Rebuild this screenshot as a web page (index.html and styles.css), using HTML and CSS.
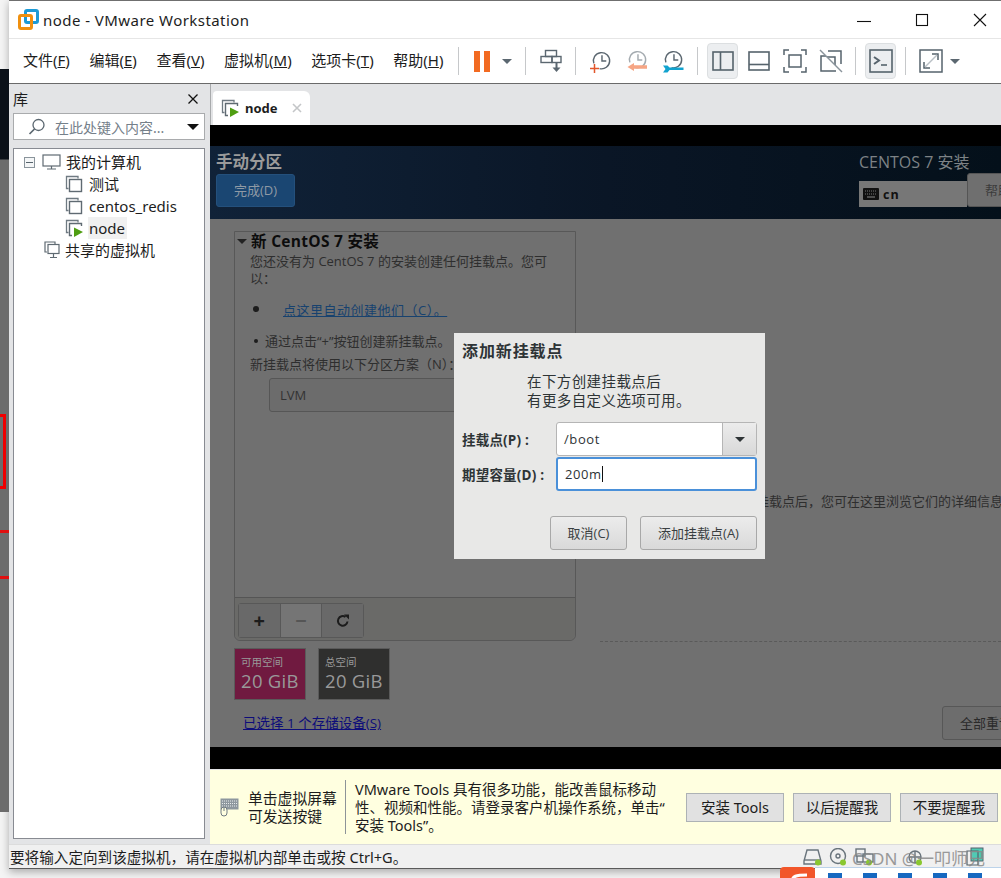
FILE: index.html
```html
<!DOCTYPE html>
<html lang="zh-CN">
<head>
    <meta charset="UTF-8">
    <meta name="viewport" content="width=device-width, initial-scale=1.0">
    <title>node - VMware Workstation</title>
    <link rel="stylesheet" href="styles.css">
</head>
<body>
    <svg class="defs" width="0" height="0">
        <symbol id="vm" viewBox="0 0 18 18">
            <path d="M3.5 13.5H1.5V1.5H13V3.5" fill="none" stroke="#6f7a82" stroke-width="1.3"/>
            <rect x="4.5" y="4.5" width="12" height="12" fill="#fff" stroke="#5f6a72" stroke-width="1.4"/>
        </symbol>
        <symbol id="vmrun" viewBox="0 0 18 18">
            <path d="M3.5 13.5H1.5V1.5H13V3.5" fill="none" stroke="#6f7a82" stroke-width="1.3"/>
            <path d="M7 16.5H4.5V4.5H16.5V7" fill="none" stroke="#5f6a72" stroke-width="1.4"/>
            <path d="M9 8.5L18 13L9 18Z" fill="#4f9e12"/>
        </symbol>
        <symbol id="clock" viewBox="0 0 22 22">
            <path d="M3 14A8.5 8.5 0 1 1 9 19.5" fill="none" stroke="#5b6770" stroke-width="1.5"/>
            <path d="M11.500 5.500V11.500H16" fill="none" stroke="#5b6770" stroke-width="1.5"/>
        </symbol>
    </svg>

    <div class="backdrop">
        <div class="red-box"></div>
        <div class="red-line red-line-a"></div>
        <div class="red-line red-line-b"></div>
    </div>

    <div class="window">
        <header class="titlebar">
            <svg class="logo" width="21" height="21" viewBox="0 0 21 21">
                <rect x="7.500" y="1.500" width="12" height="12" rx="1.500" fill="none" stroke="#1c9ad6" stroke-width="3"/>
                <rect x="1.500" y="6.500" width="12" height="13" rx="1.500" fill="none" stroke="#f0900f" stroke-width="3"/>
            </svg>
            <span class="title-text">node - VMware Workstation</span>
            <div class="win-controls">
                <svg width="16" height="16" viewBox="0 0 16 16"><path d="M1 9.500H15" stroke="#111" stroke-width="1.100"/></svg>
                <svg width="16" height="16" viewBox="0 0 16 16"><rect x="2.500" y="2.500" width="11" height="11" fill="none" stroke="#111" stroke-width="1.100"/></svg>
                <svg width="16" height="16" viewBox="0 0 16 16"><path d="M2 2L14 14M14 2L2 14" stroke="#111" stroke-width="1.100"/></svg>
            </div>
        </header>

        <div class="toolbar">
            <nav class="menu">
                <span>文件(<u>F</u>)</span>
                <span>编辑(<u>E</u>)</span>
                <span>查看(<u>V</u>)</span>
                <span>虚拟机(<u>M</u>)</span>
                <span>选项卡(<u>T</u>)</span>
                <span>帮助(<u>H</u>)</span>
            </nav>
            <i class="sep sep-first"></i>
            <div class="tool pause"><b></b><b></b></div>
            <i class="caret"></i>
            <i class="sep"></i>
            <div class="tool">
                <svg width="22" height="24" viewBox="0 0 22 24" fill="none" stroke="#5b6770" stroke-width="1.400">
                    <rect x="5.500" y="1.500" width="11" height="6"/>
                    <rect x="1" y="7.500" width="11" height="6"/>
                    <rect x="12" y="7.500" width="9" height="6"/>
                    <path d="M16.500 13.500V20" stroke-width="2"/>
                    <path d="M12.500 18.500H20.500L16.500 23Z" fill="#5b6770" stroke="none"/>
                </svg>
            </div>
            <i class="sep"></i>
            <div class="tool">
                <svg width="22" height="24" viewBox="0 0 22 24"><use href="#clock" width="21" height="21" x="1" y="1"/><path d="M0 19.500H9M4.500 15V24" stroke="#e2552a" stroke-width="1.500"/></svg>
            </div>
            <div class="tool">
                <svg width="22" height="24" viewBox="0 0 22 24"><use href="#clock" width="21" height="21" x="1" y="0" opacity=".55"/><path d="M8 14L1.500 18L8 22V19.800H21V16.300H8Z" fill="#f6a584"/></svg>
            </div>
            <div class="tool">
                <svg width="22" height="24" viewBox="0 0 22 24"><use href="#clock" width="21" height="21" x="1" y="0"/><path d="M1 16.500H5.500L7.500 18.500H21.500V21H7.500L5.500 23.500H1L3.500 20Z" fill="#12a3cf"/></svg>
            </div>
            <i class="sep"></i>
            <div class="tool active">
                <svg width="22" height="22" viewBox="0 0 22 22" fill="none" stroke="#56636c" stroke-width="1.600"><rect x="1" y="2" width="20" height="18"/><path d="M8.500 2V20"/></svg>
            </div>
            <div class="tool">
                <svg width="22" height="22" viewBox="0 0 22 22" fill="none" stroke="#56636c" stroke-width="1.600"><rect x="1" y="2" width="20" height="18"/><path d="M1 14.500H21"/></svg>
            </div>
            <div class="tool">
                <svg width="24" height="24" viewBox="0 0 24 24" fill="none" stroke="#56636c" stroke-width="1.500"><path d="M1 6V1H6M18 1H23V6M23 18V23H18M6 23H1V18"/><rect x="6" y="6" width="12" height="12"/></svg>
            </div>
            <div class="tool">
                <svg width="24" height="24" viewBox="0 0 24 24" fill="none" stroke="#56636c" stroke-width="1.500"><path d="M9 2H22V15M17 22H2V7H7"/><path d="M8 8H16V16" /><path d="M1 1L23 23" stroke="#8a949b"/></svg>
            </div>
            <i class="sep"></i>
            <div class="tool active">
                <svg width="24" height="24" viewBox="0 0 24 24" fill="none" stroke="#56636c" stroke-width="1.600"><rect x="1" y="1" width="22" height="22"/><path d="M5 8L10 11.500L5 15" stroke-width="2"/><path d="M12 16H18"/></svg>
            </div>
            <i class="sep"></i>
            <div class="tool">
                <svg width="24" height="24" viewBox="0 0 24 24" fill="none" stroke="#56636c" stroke-width="1.500"><rect x="1" y="1" width="22" height="22"/><path d="M13 5H19V11M11 19H5V13" /><path d="M18 6L6 18" stroke="#b9c0c5"/></svg>
            </div>
            <i class="caret caret-last"></i>
        </div>

        <div class="main">
            <aside class="library">
                <div class="lib-head">
                    <span>库</span>
                    <svg width="12" height="12" viewBox="0 0 12 12"><path d="M1.500 1.500L10.500 10.500M10.500 1.500L1.500 10.500" stroke="#111" stroke-width="1.300"/></svg>
                </div>
                <div class="lib-search">
                    <svg width="18" height="18" viewBox="0 0 18 18" fill="none" stroke="#5b6770" stroke-width="1.300"><circle cx="10.500" cy="7" r="5.500"/><path d="M6.500 11L1.500 16" stroke-width="1.700"/></svg>
                    <span>在此处键入内容...</span>
                    <i class="lib-arrow"></i>
                </div>
                <div class="tree">
                    <div class="tree-row">
                        <i class="expander"></i>
                        <svg class="tree-icon" width="19" height="16" viewBox="0 0 19 16" fill="none" stroke="#5f6a72" stroke-width="1.200"><rect x="1" y="1" width="17" height="11"/><path d="M9.500 12V15M5 15H14"/></svg>
                        <span>我的计算机</span>
                    </div>
                    <div class="tree-row tree-child"><svg class="tree-icon" width="18" height="18"><use href="#vm"/></svg><span>测试</span></div>
                    <div class="tree-row tree-child"><svg class="tree-icon" width="18" height="18"><use href="#vm"/></svg><span>centos_redis</span></div>
                    <div class="tree-row tree-child"><svg class="tree-icon" width="18" height="18"><use href="#vmrun"/></svg><span class="selected">node</span></div>
                    <div class="tree-row tree-shared">
                        <svg class="tree-icon" width="16" height="18" viewBox="0 0 16 18" fill="none" stroke="#5f6a72" stroke-width="1.200"><path d="M3 11H1V1H11V3"/><rect x="4" y="3.500" width="11" height="9" fill="#fff"/><path d="M9.500 12.500V16.500M6 16.500H13"/></svg>
                        <span>共享的虚拟机</span>
                    </div>
                </div>
            </aside>

            <section class="workspace">
                <div class="tabs">
                    <div class="tab">
                        <svg width="18" height="18"><use href="#vmrun"/></svg>
                        <span class="tab-name">node</span>
                        <svg class="tab-close" width="10" height="10" viewBox="0 0 10 10"><path d="M1 1L9 9M9 1L1 9" stroke="#c4c6c8" stroke-width="1.600"/></svg>
                    </div>
                </div>

                <div class="guest">
                    <div class="guest-head">
                        <div class="guest-head-left">
                            <div class="spoke-title">手动分区</div>
                            <div class="done-btn">完成(D)</div>
                        </div>
                        <div class="guest-head-right">
                            <div class="product">CENTOS 7 安装</div>
                            <div class="lang-row">
                                <div class="lang-box">
                                    <svg width="16" height="12" viewBox="0 0 16 12"><rect width="16" height="12" rx="1" fill="#111"/><path d="M2 3H14M2 6H14" stroke="#777" stroke-width="1" stroke-dasharray="1 1"/><path d="M4 9H12" stroke="#777" stroke-width="1.200"/></svg>
                                    <span>cn</span>
                                </div>
                                <div class="help-btn">帮助！</div>
                            </div>
                        </div>
                    </div>

                    <div class="guest-body">
                        <div class="guest-left">
                            <div class="mount-panel">
                                <div class="mount-info">
                                    <h3><i class="tri"></i>新 CentOS 7 安装</h3>
                                    <p>您还没有为 CentOS 7 的安装创建任何挂载点。您可以：</p>
                                    <div class="bullet-row"><i class="bullet"></i><a class="auto-link">点这里自动创建他们（C）。</a></div>
                                    <div class="plain-row"><i class="bullet small"></i><span>通过点击“+”按钮创建新挂载点。</span></div>
                                    <p class="scheme">新挂载点将使用以下分区方案（N）：</p>
                                    <div class="scheme-select">LVM</div>
                                </div>
                                <div class="mount-tools">
                                    <div class="tool-group">
                                        <span class="on">+</span>
                                        <span class="off">−</span>
                                        <span class="on">
                                            <svg width="14" height="14" viewBox="0 0 14 14" fill="none" stroke="#1c1c1c" stroke-width="2"><path d="M11.500 7.500A4.800 4.800 0 1 1 9.500 3"/><path d="M8 0.500H13V5.500Z" fill="#1c1c1c" stroke="none"/></svg>
                                        </span>
                                    </div>
                                </div>
                            </div>
                            <div class="space-cards">
                                <div class="space-card free"><small>可用空间</small><b>20 GiB</b></div>
                                <div class="space-card total"><small>总空间</small><b>20 GiB</b></div>
                            </div>
                            <a class="device-link">已选择 1 个存储设备(S)</a>
                        </div>
                        <div class="guest-right">
                            <p class="hint">在您为 CentOS 7 安装创建挂载点后，您可在这里浏览它们的详细信息。</p>
                            <div class="dash"></div>
                            <div class="reset-btn">全部重设(R)</div>
                        </div>
                    </div>

                    <div class="dialog">
                        <h2>添加新挂载点</h2>
                        <p class="dialog-text">在下方创建挂载点后<br>有更多自定义选项可用。</p>
                        <div class="field">
                            <label>挂载点(P) :</label>
                            <div class="combo"><span>/boot</span><div class="combo-btn"><i></i></div></div>
                        </div>
                        <div class="field">
                            <label>期望容量(D) :</label>
                            <div class="entry"><span>200m</span><i class="cursor"></i></div>
                        </div>
                        <div class="dialog-actions">
                            <div class="dlg-btn cancel">取消(C)</div>
                            <div class="dlg-btn add">添加挂载点(A)</div>
                        </div>
                    </div>
                </div>

                <div class="infobar">
                    <svg class="kbd" width="19" height="19" viewBox="0 0 19 19">
                        <rect x="0.500" y="0.500" width="18" height="11" fill="#8d979e"/>
                        <path d="M2 3H17M2 5.500H17M2 8H17" stroke="#e8ecec" stroke-width="1" stroke-dasharray="1 1"/>
                        <rect x="1" y="9" width="6" height="9" rx="3" fill="#ffffe0" stroke="#6f7a82"/>
                        <path d="M4 9V13" stroke="#6f7a82"/>
                    </svg>
                    <div class="info-left">单击虚拟屏幕<br>可发送按键</div>
                    <div class="info-text">VMware Tools 具有很多功能，能改善鼠标移动<br>性、视频和性能。请登录客户机操作系统，单击“<br>安装 Tools”。</div>
                    <div class="info-btns">
                        <div class="info-btn">安装 Tools</div>
                        <div class="info-btn">以后提醒我</div>
                        <div class="info-btn">不要提醒我</div>
                    </div>
                </div>
            </section>
        </div>

        <footer class="statusbar">
            <span>要将输入定向到该虚拟机，请在虚拟机内部单击或按 Ctrl+G。</span>
            <div class="tray">
                <svg width="20" height="18" viewBox="0 0 20 18" fill="none" stroke="#5b6770" stroke-width="1.400"><path d="M1 13L4 2H15L18 13V16H1Z"/><path d="M1 12H18"/><circle cx="15" cy="14.500" r="3" fill="#7fc31c" stroke="none"/></svg>
                <svg width="20" height="18" viewBox="0 0 20 18" fill="none" stroke="#5b6770" stroke-width="1.400"><circle cx="9" cy="8" r="7.500"/><circle cx="9" cy="8" r="2"/><circle cx="14" cy="14.500" r="3" fill="#7fc31c" stroke="none"/></svg>
                <svg width="20" height="18" viewBox="0 0 20 18" fill="none" stroke="#5b6770" stroke-width="1.400"><rect x="1" y="1" width="9" height="7"/><rect x="8" y="6" width="10" height="8"/><path d="M2 8V14H8"/><circle cx="14" cy="14.500" r="3" fill="#7fc31c" stroke="none"/></svg>
                <svg class="tray-gap" width="20" height="18" viewBox="0 0 20 18" fill="none" stroke="#5b6770" stroke-width="1.400"><circle cx="9" cy="9" r="6"/><path d="M9 3V15M3 9H15"/><circle cx="13" cy="14.500" r="3" fill="#7fc31c" stroke="none"/></svg>
                <svg class="tray-last" width="18" height="20" viewBox="0 0 18 20"><rect x="5" y="1" width="12" height="13" fill="#3ec7ae" stroke="#44545c"/><path d="M1 4H12V18H1Z" fill="none" stroke="#44545c" stroke-width="1.200"/></svg>
            </div>
            <span class="watermark">CSDN @一叩师兄</span>
        </footer>
    </div>

    <div class="ime">
        <div class="ime-logo">
            <svg width="35" height="11" viewBox="0 0 35 11"><path d="M12 10C12 4 16 3 27 3" fill="none" stroke="#fff" stroke-width="3"/></svg>
        </div>
        <div class="ime-bar">
            <i></i><i></i><i></i><i></i><i></i><i></i>
        </div>
    </div>
</body>
</html>
```

FILE: styles.css
```css
* {
    box-sizing: border-box;
}

html, body {
    margin: 0;
    padding: 0;
    height: 878px;
    overflow: hidden;
}

body {
    display: flex;
    position: relative;
    background-color: #f4f4f4;
    color: #1d1d1d;
    font-family: "Noto Sans", "Noto Sans CJK SC", sans-serif;
    font-size: 15px;
}

.defs {
    position: absolute;
}

p, h2, h3 {
    margin: 0;
}

/* what shows of the desktop left of the window */
.backdrop {
    position: relative;
    width: 9px;
    height: 743px;
    margin-top: 69px;
    flex: none;
    background: linear-gradient(#0b1119 0, #0b1119 90px, #6c6c6c 91px);
}

.red-box {
    position: absolute;
    left: -3px;
    top: 345px;
    width: 9px;
    height: 75px;
    border: 3px solid #f00000;
}

.red-line {
    position: absolute;
    left: 0;
    width: 9px;
    height: 3px;
    background-color: #e01010;
}

.red-line-a {
    top: 461px;
}

.red-line-b {
    top: 507px;
}

.window {
    width: 992px;
    height: 869px;
    flex: none;
    display: flex;
    flex-direction: column;
    background-color: #fff;
    border-top: 1px solid #6f6f6f;
    border-bottom: 1px solid #5a5a5a;
    box-shadow: 0 3px 8px rgba(0, 0, 0, 0.3);
}

.titlebar {
    height: 38px;
    flex: none;
    display: flex;
    align-items: center;
    padding-left: 9px;
    border-bottom: 1px solid #e6e6e6;
}

.logo {
    margin-right: 4px;
}

.title-text {
    font-size: 15px;
    letter-spacing: 0.45px;
}

.win-controls {
    margin-left: auto;
    display: flex;
    gap: 42px;
    padding-right: 13px;
}

.toolbar {
    height: 45px;
    flex: none;
    display: flex;
    align-items: center;
    padding-left: 14px;
    border-bottom: 1px solid #6a6a6a;
}

.menu {
    display: flex;
    gap: 19.600px;
    margin-bottom: 3px;
    font-size: 15px;
}

.sep {
    width: 1px;
    height: 28px;
    margin: 0 6.500px;
    background-color: #c6c8ca;
    flex: none;
}

.sep-first {
    margin-left: 15px;
}

.toolbar .tool {
    width: 36px;
    height: 36px;
    display: flex;
    align-items: center;
    justify-content: center;
    flex: none;
}

.toolbar .tool.active {
    width: 31px;
    margin: 0 2.500px;
    background-color: #eceef0;
    border: 1px solid #dcdfe1;
    border-radius: 4px;
}

.toolbar .pause {
    width: 33px;
    gap: 4px;
}

.pause b {
    width: 6px;
    height: 21px;
    background-color: #f26a21;
}

.caret {
    width: 0;
    height: 0;
    margin: 0 6.500px 0 3.500px;
    border-left: 5px solid transparent;
    border-right: 5px solid transparent;
    border-top: 5px solid #5b6770;
    flex: none;
}

.caret-last {
    margin-left: 1.500px;
}

.main {
    flex: 1;
    min-height: 0;
    display: flex;
}

.library {
    width: 201px;
    flex: none;
    display: flex;
    flex-direction: column;
    padding: 0 5px 5px 3px;
    background-color: #e3e4e6;
    border-left: 1px solid #e3e4e6;
}

.lib-head {
    height: 29px;
    display: flex;
    align-items: center;
    justify-content: space-between;
    padding: 0 6px 0 0;
    font-size: 15px;
}

.lib-search {
    height: 27px;
    display: flex;
    align-items: center;
    padding-left: 14px;
    background-color: #fff;
    border: 1px solid #a9abad;
    color: #75808a;
    font-size: 14px;
}

.lib-search span {
    margin-left: 9px;
    white-space: nowrap;
}

.lib-arrow {
    width: 0;
    height: 0;
    margin-left: auto;
    margin-right: 5px;
    border-left: 6px solid transparent;
    border-right: 6px solid transparent;
    border-top: 6px solid #111;
}

.tree {
    flex: 1;
    margin-top: 8px;
    padding-top: 2px;
    background-color: #fff;
    border: 1px solid #888b92;
}

.tree-row {
    height: 22px;
    display: flex;
    align-items: center;
    padding-left: 10px;
    font-size: 15px;
    white-space: nowrap;
}

.expander {
    position: relative;
    width: 11px;
    height: 11px;
    margin-right: 7px;
    border: 1px solid #8a949b;
    background-color: #f4f6f7;
    flex: none;
}

.expander::after {
    content: "";
    position: absolute;
    left: 1px;
    right: 1px;
    top: 4px;
    height: 1px;
    background-color: #56636c;
}

.tree-icon {
    flex: none;
}

.tree-row > span {
    margin-left: 4px;
    padding: 0 2px 0 1px;
    line-height: 22px;
}

.tree-child {
    padding-left: 51px;
}

.tree-child > span {
    margin-left: 5px;
}

.selected {
    background-color: #f0f0f0;
}

.tree-shared {
    padding-left: 30px;
}

.workspace {
    flex: 1;
    min-width: 0;
    display: flex;
    flex-direction: column;
}

.tabs {
    height: 41px;
    flex: none;
    padding: 7px 0 0 2px;
    background-color: #e3e4e6;
    border-left: 1px solid #a8aaac;
}

.tab {
    width: 97px;
    height: 34px;
    display: flex;
    align-items: center;
    padding-left: 8px;
    background-color: #fff;
    border-radius: 4px 6px 0 0;
}

.tab-name {
    margin-left: 6px;
    font-size: 13px;
    font-weight: 700;
}

.tab-close {
    margin-left: 14px;
}

/* the guest screen, dimmed behind the dialog */
.guest {
    position: relative;
    height: 644px;
    flex: none;
    display: flex;
    flex-direction: column;
    padding: 21px 0 22px;
    background-color: #000;
    overflow: hidden;
    font-family: "Open Sans", "Noto Sans CJK SC", sans-serif;
}

.guest-head {
    height: 73px;
    flex: none;
    display: flex;
    justify-content: space-between;
    background: linear-gradient(90deg, #102238, #0a1626 50%, #04101a);
}

.guest-head-left {
    padding: 7px 0 0 6px;
}

.spoke-title {
    color: #9a9a9a;
    font-size: 16.500px;
    font-weight: 700;
    line-height: 18px;
}

.done-btn {
    width: 79px;
    height: 33px;
    margin-top: 3px;
    background-color: #1a4672;
    border: 1px solid #24507c;
    border-radius: 3px;
    color: #8f9aa5;
    font-size: 13px;
    line-height: 31px;
    text-align: center;
}

.guest-head-right {
    width: 142px;
    padding-top: 7px;
    overflow: hidden;
}

.product {
    color: #7d8286;
    font-size: 16px;
    line-height: 18px;
    white-space: nowrap;
}

.lang-row {
    display: flex;
    width: 170px;
    margin-top: 2px;
    align-items: flex-end;
}

.lang-box {
    width: 108px;
    height: 26px;
    display: flex;
    align-items: center;
    gap: 4px;
    padding-left: 4px;
    background-color: #777;
    color: #111;
    font-size: 12.500px;
    font-weight: 700;
    letter-spacing: 1px;
}

.help-btn {
    width: 60px;
    height: 34px;
    padding-left: 17px;
    background-color: #6f6f6f;
    border: 1px solid #555;
    border-radius: 3px;
    color: #3c3c3c;
    font-size: 13px;
    line-height: 32px;
    white-space: nowrap;
}

.guest-body {
    flex: 1;
    min-height: 0;
    display: flex;
    background-color: #707070;
    color: #2e2e2e;
}

.guest-left {
    width: 390px;
    flex: none;
    padding: 12px 0 0 24px;
}

.mount-panel {
    width: 342px;
    height: 410px;
    display: flex;
    flex-direction: column;
    border: 1px solid #585858;
    border-radius: 0 0 6px 6px;
}

.mount-info {
    flex: 1;
    padding: 0 4px 0 2px;
    font-size: 13px;
}

.mount-info h3 {
    display: flex;
    align-items: center;
    margin-bottom: 3px;
    color: #0c0c0c;
    font-size: 15.500px;
    font-weight: 700;
    letter-spacing: 0.300px;
    line-height: 18px;
}

.tri {
    width: 0;
    height: 0;
    margin-right: 4px;
    border-left: 5px solid transparent;
    border-right: 5px solid transparent;
    border-top: 5px solid #222;
}

.mount-info p {
    margin-left: 13px;
    line-height: 17px;
}

.bullet-row {
    display: flex;
    align-items: center;
    height: 20px;
    margin: 12px 0 0 16px;
}

.bullet {
    width: 6px;
    height: 6px;
    flex: none;
    background-color: #1c1c1c;
    border-radius: 50%;
}

.bullet.small {
    width: 4px;
    height: 4px;
}

.auto-link {
    margin-left: 24px;
    color: #17426f;
    letter-spacing: 0.500px;
    text-decoration: underline;
}

.plain-row {
    display: flex;
    align-items: center;
    gap: 7px;
    height: 17px;
    margin: 13px 0 0 17px;
    white-space: nowrap;
}

.mount-info .scheme {
    margin-top: 7px;
    white-space: nowrap;
}

.scheme-select {
    width: 200px;
    height: 34px;
    margin: 5px 0 0 32px;
    padding-left: 10px;
    background-color: #6c6c6c;
    border: 1px solid #565656;
    border-radius: 3px;
    line-height: 32px;
    color: #333;
}

.mount-tools {
    height: 43px;
    flex: none;
    padding: 5px 0 0 3px;
    background-color: #6a6a68;
    border-top: 1px solid #555;
    border-radius: 0 0 6px 6px;
}

.tool-group {
    display: flex;
    width: 126px;
    height: 35px;
    border: 1px solid #585858;
    border-radius: 3px;
}

.tool-group span {
    flex: 1;
    display: flex;
    align-items: center;
    justify-content: center;
    font-size: 20px;
    font-weight: 700;
    border-right: 1px solid #585858;
}

.tool-group span:last-child {
    border-right: 0;
}

.tool-group .on {
    background-color: #696969;
    color: #1c1c1c;
}

.tool-group .off {
    background-color: #757575;
    color: #555;
}

.space-cards {
    display: flex;
    gap: 12px;
    margin-top: 7px;
}

.space-card {
    width: 72px;
    height: 52px;
    padding: 6px 0 0 6px;
    border: 1px solid #5a5a5a;
    color: #999;
    white-space: nowrap;
}

.space-card small {
    display: block;
    font-size: 10.500px;
    line-height: 14px;
}

.space-card b {
    display: block;
    font-size: 18.500px;
    font-weight: 400;
    letter-spacing: 0.300px;
    line-height: 24px;
}

.free {
    background-color: #701a40;
}

.total {
    background-color: #2f2f2e;
}

.device-link {
    display: block;
    margin: 12px 0 0 9px;
    color: #0d0d7a;
    font-size: 13.500px;
    text-decoration: underline;
    white-space: nowrap;
}

.guest-right {
    flex: 1;
    min-width: 0;
    padding-top: 273px;
    font-size: 13px;
}

.hint {
    margin-left: 2px;
    color: #2e2e2e;
    line-height: 18px;
    white-space: nowrap;
}

.dash {
    height: 0;
    margin-top: 131px;
    border-top: 1px dashed #5a5a5a;
}

.reset-btn {
    width: 90px;
    height: 34px;
    margin: 64px 0 0 342px;
    padding-left: 17px;
    background-color: #6d6d6d;
    border: 1px solid #575757;
    border-radius: 3px;
    color: #2a2a2a;
    line-height: 32px;
    white-space: nowrap;
}

/* floats over the dimmed guest */
.dialog {
    position: absolute;
    left: 244px;
    top: 208px;
    width: 311px;
    height: 226px;
    padding: 8px 8px 0;
    background-color: #e8e8e7;
    color: #2e3436;
}

.dialog h2 {
    font-size: 16px;
    font-weight: 700;
    letter-spacing: 0.900px;
    line-height: 20px;
}

.dialog-text {
    margin: 11px 0 0 65px;
    font-size: 14.500px;
    letter-spacing: 0.400px;
    line-height: 19px;
}

.field {
    display: flex;
    align-items: center;
    height: 34px;
    margin-bottom: 1px;
}

.dialog-text + .field {
    margin-top: 12px;
}

.field label {
    width: 94px;
    flex: none;
    font-size: 13.500px;
    font-weight: 700;
    letter-spacing: 0.200px;
    white-space: nowrap;
}

.combo, .entry {
    width: 201px;
    height: 34px;
    display: flex;
    align-items: center;
    background-color: #fff;
    border-radius: 3px;
    font-size: 13px;
    letter-spacing: 0.600px;
}

.combo {
    border: 1px solid #b5b5b5;
}

.combo span, .entry span {
    margin-left: 7px;
}

.combo-btn {
    width: 34px;
    height: 100%;
    margin-left: auto;
    display: flex;
    align-items: center;
    justify-content: center;
    background: linear-gradient(#ececec, #d8d8d8);
    border-left: 1px solid #b5b5b5;
}

.combo-btn i {
    width: 0;
    height: 0;
    border-left: 5px solid transparent;
    border-right: 5px solid transparent;
    border-top: 5px solid #2e3436;
}

.entry {
    border: 2px solid #4a90d9;
}

.cursor {
    width: 1px;
    height: 16px;
    background-color: #111;
}

.dialog-actions {
    display: flex;
    justify-content: flex-end;
    gap: 13px;
    margin-top: 25px;
}

.dlg-btn {
    height: 34px;
    background: linear-gradient(#ececec, #d9d9d9);
    border: 1px solid #a8a8a8;
    border-radius: 3px;
    font-size: 13px;
    line-height: 32px;
    text-align: center;
    color: #3a3f41;
}

.cancel {
    width: 77px;
}

.add {
    width: 117px;
}

.infobar {
    flex: 1;
    min-height: 0;
    display: flex;
    align-items: center;
    background-color: #ffffe0;
    border-top: 1px solid #e3e4e6;
}

.kbd {
    margin-left: 10px;
    flex: none;
}

.info-left {
    width: 97px;
    margin-left: 9px;
    flex: none;
    font-size: 14.800px;
    line-height: 18px;
    white-space: nowrap;
}

.info-text {
    width: 341px;
    flex: none;
    padding-left: 9px;
    border-left: 1px solid #8d9498;
    font-size: 14.500px;
    line-height: 18px;
    white-space: nowrap;
}

.info-btns {
    display: flex;
    gap: 9px;
}

.info-btn {
    width: 98px;
    height: 29px;
    background-color: #e1e1e1;
    border: 1px solid #adb2b5;
    font-size: 14.500px;
    line-height: 27px;
    text-align: center;
    white-space: nowrap;
}

.statusbar {
    position: relative;
    height: 24px;
    flex: none;
    display: flex;
    align-items: center;
    padding-left: 1px;
    background-color: #f0f0f0;
    border-top: 1px solid #dcdcdc;
    font-size: 14.600px;
    white-space: nowrap;
}

.tray {
    margin-left: auto;
    display: flex;
    align-items: center;
    gap: 6px;
    padding-right: 17px;
    opacity: 0.9;
}

.tray-gap {
    margin-left: 25px;
}

.tray-last {
    margin-left: 34px;
}

.watermark {
    position: absolute;
    left: 843px;
    top: 0;
    color: #8a8a8a;
    font-size: 17px;
    opacity: 0.85;
}

/* input method bar, clipped by the bottom of the screen */
.ime {
    position: absolute;
    left: 780px;
    top: 867px;
    width: 221px;
    height: 11px;
    display: flex;
}

.ime-logo {
    width: 35px;
    height: 11px;
    background-color: #f2562a;
    border-radius: 4px 4px 0 0;
}

.ime-bar {
    flex: 1;
    display: flex;
    gap: 21px;
    padding: 5px 0 0 13px;
    background-color: #fff;
    border-top: 1px solid #bcd3ea;
}

.ime-bar i {
    width: 14px;
    height: 6px;
    background-color: #1668c0;
}
```
